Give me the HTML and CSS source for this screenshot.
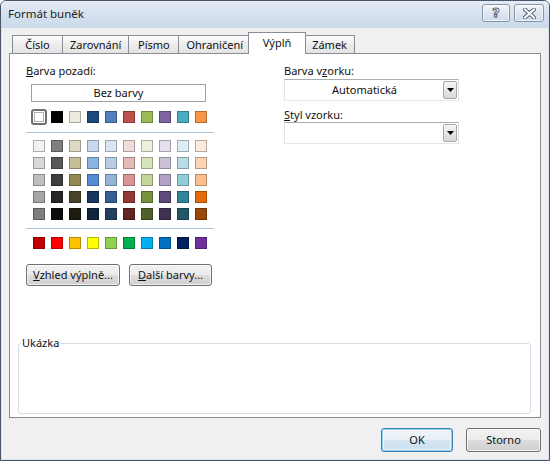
FILE: index.html
```html
<!DOCTYPE html>
<html lang="cs">
<head>
<meta charset="utf-8">
<title>Formát buněk</title>
<link rel="stylesheet" href="styles.css">
</head>
<body>
<div class="window">
  <div class="titlebar">
    <span class="title">Formát buněk</span>
    <div class="caption-buttons">
      <div class="cap help">?</div>
      <div class="cap close">
        <svg width="13" height="11" viewBox="0 0 13 11"><path d="M2 1.5 L11 9.5 M11 1.5 L2 9.5" stroke="#56647a" stroke-width="4" stroke-linecap="square"/><path d="M2 1.5 L11 9.5 M11 1.5 L2 9.5" stroke="#fff" stroke-width="2" stroke-linecap="square"/></svg>
      </div>
    </div>
  </div>
  <div class="client">
    <div class="tabs">
      <div class="tab">Číslo</div>
      <div class="tab">Zarovnání</div>
      <div class="tab">Písmo</div>
      <div class="tab">Ohraničení</div>
      <div class="tab active">Výplň</div>
      <div class="tab">Zámek</div>
    </div>
    <div class="panel">
      <div class="columns">
        <div class="left">
          <div class="label"><u>B</u>arva pozadí:</div>
          <div class="nocolor">Bez barvy</div>
          <div class="swatches toprow">
            <div class="cell selected"><span class="sw" style="background:#ffffff"></span></div>
            <div class="cell"><span class="sw" style="background:#000000"></span></div>
            <div class="cell"><span class="sw" style="background:#eeece1"></span></div>
            <div class="cell"><span class="sw" style="background:#1f497d"></span></div>
            <div class="cell"><span class="sw" style="background:#4f81bd"></span></div>
            <div class="cell"><span class="sw" style="background:#c0504d"></span></div>
            <div class="cell"><span class="sw" style="background:#9bbb59"></span></div>
            <div class="cell"><span class="sw" style="background:#8064a2"></span></div>
            <div class="cell"><span class="sw" style="background:#4bacc6"></span></div>
            <div class="cell"><span class="sw" style="background:#f79646"></span></div>
          </div>
          <div class="sep sep1"></div>
          <div class="swatches grid">
            <span class="sw" style="background:#f2f2f2"></span>
            <span class="sw" style="background:#7f7f7f"></span>
            <span class="sw" style="background:#ddd9c3"></span>
            <span class="sw" style="background:#c6d9f0"></span>
            <span class="sw" style="background:#dbe5f1"></span>
            <span class="sw" style="background:#f2dcdb"></span>
            <span class="sw" style="background:#ebf1dd"></span>
            <span class="sw" style="background:#e5e0ec"></span>
            <span class="sw" style="background:#dbeef3"></span>
            <span class="sw" style="background:#fdeada"></span>

            <span class="sw" style="background:#d8d8d8"></span>
            <span class="sw" style="background:#595959"></span>
            <span class="sw" style="background:#c4bd97"></span>
            <span class="sw" style="background:#8db3e2"></span>
            <span class="sw" style="background:#b8cce4"></span>
            <span class="sw" style="background:#e5b9b7"></span>
            <span class="sw" style="background:#d7e3bc"></span>
            <span class="sw" style="background:#ccc1d9"></span>
            <span class="sw" style="background:#b7dde8"></span>
            <span class="sw" style="background:#fbd5b5"></span>

            <span class="sw" style="background:#bfbfbf"></span>
            <span class="sw" style="background:#3f3f3f"></span>
            <span class="sw" style="background:#938953"></span>
            <span class="sw" style="background:#548dd4"></span>
            <span class="sw" style="background:#95b3d7"></span>
            <span class="sw" style="background:#d99694"></span>
            <span class="sw" style="background:#c3d69b"></span>
            <span class="sw" style="background:#b2a2c7"></span>
            <span class="sw" style="background:#92cddc"></span>
            <span class="sw" style="background:#fac08f"></span>

            <span class="sw" style="background:#a5a5a5"></span>
            <span class="sw" style="background:#262626"></span>
            <span class="sw" style="background:#494429"></span>
            <span class="sw" style="background:#17365d"></span>
            <span class="sw" style="background:#366092"></span>
            <span class="sw" style="background:#953734"></span>
            <span class="sw" style="background:#76923c"></span>
            <span class="sw" style="background:#5f497a"></span>
            <span class="sw" style="background:#31859b"></span>
            <span class="sw" style="background:#e36c09"></span>

            <span class="sw" style="background:#7f7f7f"></span>
            <span class="sw" style="background:#0c0c0c"></span>
            <span class="sw" style="background:#1d1b10"></span>
            <span class="sw" style="background:#0f243e"></span>
            <span class="sw" style="background:#244061"></span>
            <span class="sw" style="background:#632423"></span>
            <span class="sw" style="background:#4f6128"></span>
            <span class="sw" style="background:#3f3151"></span>
            <span class="sw" style="background:#205867"></span>
            <span class="sw" style="background:#974806"></span>
          </div>
          <div class="sep sep2"></div>
          <div class="swatches grid standard">
            <span class="sw" style="background:#c00000"></span>
            <span class="sw" style="background:#ff0000"></span>
            <span class="sw" style="background:#ffc000"></span>
            <span class="sw" style="background:#ffff00"></span>
            <span class="sw" style="background:#92d050"></span>
            <span class="sw" style="background:#00b050"></span>
            <span class="sw" style="background:#00b0f0"></span>
            <span class="sw" style="background:#0070c0"></span>
            <span class="sw" style="background:#002060"></span>
            <span class="sw" style="background:#7030a0"></span>
          </div>
          <div class="btnrow">
            <div class="btn fill"><u>V</u>zhled výplně...</div>
            <div class="btn more"><u>D</u>alší barvy...</div>
          </div>
        </div>
        <div class="right">
          <div class="label">Barva v<u>z</u>orku:</div>
          <div class="combo first">
            <span class="combo-text">Automatická</span>
            <span class="combo-arrow"><svg width="7" height="4" viewBox="0 0 7 4"><path d="M0 0 H7 L3.5 4 Z" fill="#000"/></svg></span>
          </div>
          <div class="label second"><u>S</u>tyl vzorku:</div>
          <div class="combo">
            <span class="combo-text"></span>
            <span class="combo-arrow"><svg width="7" height="4" viewBox="0 0 7 4"><path d="M0 0 H7 L3.5 4 Z" fill="#000"/></svg></span>
          </div>
        </div>
      </div>
      <fieldset class="sample">
        <legend>Ukázka</legend>
      </fieldset>
    </div>
    <div class="footer">
      <div class="btn dlg default">OK</div>
      <div class="btn dlg">Storno</div>
    </div>
  </div>
</div>
</body>
</html>
```
FILE: styles.css
```css
html, body {
  margin: 0;
  padding: 0;
}
body {
  width: 550px;
  height: 461px;
  overflow: hidden;
  font-family: "Noto Sans", "DejaVu Sans", sans-serif;
  font-size: 11px;
  color: #111;
  background: #ffffff;
}
u {
  text-decoration: underline;
  text-underline-offset: 1px;
}

.window {
  box-sizing: border-box;
  width: 550px;
  height: 461px;
  border: 1px solid #485566;
  border-radius: 6px 6px 0 0;
  background: #d6e2f0;
  display: flex;
  flex-direction: column;
  overflow: hidden;
}

.titlebar {
  height: 27px;
  flex: none;
  display: flex;
  align-items: flex-start;
  background: linear-gradient(#e4ecf6, #d3dfee 60%, #ccdaeb);
}
.title {
  margin: 5px 0 0 7px;
  font-size: 11.5px;
  color: #1e1e1e;
  line-height: 16px;
}
.caption-buttons {
  margin: 3px 5px 0 auto;
  display: flex;
  gap: 4px;
}
.cap {
  box-sizing: border-box;
  width: 28px;
  height: 18px;
  border: 1px solid #8794a8;
  border-radius: 3px;
  background: linear-gradient(#f3f6fa, #dde5ef 50%, #d2dcea);
  box-shadow: inset 0 0 0 1px rgba(255,255,255,0.6);
  display: flex;
  align-items: center;
  justify-content: center;
}
.cap.help {
  font-family: "DejaVu Sans", sans-serif;
  font-size: 13px;
  font-weight: bold;
  line-height: 16px;
  color: #ffffff;
  -webkit-text-stroke: 1px #56647a;
}
.cap.close {
  width: 30px;
}

.client {
  flex: 1;
  margin: 0 1px 1px 1px;
  background: #f0f0f0;
  padding: 4px 7px 0 7px;
  display: flex;
  flex-direction: column;
}

.tabs {
  height: 21px;
  display: flex;
  align-items: flex-end;
  padding-left: 3px;
}
.tab {
  box-sizing: border-box;
  height: 18px;
  min-width: 51px;
  padding: 0 7px;
  border: 1px solid #898c95;
  border-bottom: 0;
  margin-right: -1px;
  background: linear-gradient(#fdfdfd, #ececec 50%, #e3e3e3);
  text-align: center;
  line-height: 17px;
  white-space: nowrap;
}
.tab.active {
  height: 22px;
  min-width: 58px;
  margin: 0 -2px -1px -2px;
  padding: 0 9px;
  background: #ffffff;
  position: relative;
  z-index: 2;
  line-height: 19px;
}

.panel {
  box-sizing: border-box;
  height: 365px;
  flex: none;
  border: 1px solid #898c95;
  background: #ffffff;
  padding: 10px 9px 3px 8px;
  display: flex;
  flex-direction: column;
}

.columns {
  display: flex;
  padding-left: 8px;
}
.left {
  width: 188px;
  display: flex;
  flex-direction: column;
}
.right {
  margin-left: 70px;
  width: 175px;
  display: flex;
  flex-direction: column;
}
.label {
  height: 14px;
  line-height: 14px;
  white-space: nowrap;
}
.label.second {
  margin-top: 7px;
}

.nocolor {
  box-sizing: border-box;
  margin: 6px 0 0 5px;
  width: 175px;
  height: 18px;
  border: 1px solid #a0a0a0;
  text-align: center;
  line-height: 16px;
}

.swatches {
  margin-left: 4px;
  display: grid;
  grid-template-columns: repeat(10, 18px);
}
.toprow {
  margin-top: 7px;
  height: 16px;
}
.cell {
  height: 16px;
  display: flex;
  align-items: center;
  justify-content: center;
}
.sw {
  display: block;
  box-sizing: border-box;
  width: 12px;
  height: 12px;
  box-shadow: inset 0 0 0 1px rgba(0, 0, 0, 0.28);
}
.grid {
  row-gap: 5px;
  justify-items: center;
}
.cell.selected {
  box-sizing: border-box;
  width: 16px;
  margin-left: 1px;
  border: 2px solid #707070;
  border-radius: 3px;
  background: #ffffff;
}
.cell.selected .sw {
  width: 10px;
  height: 10px;
  box-shadow: inset 0 0 0 1px #b0b0b0;
}

.sep {
  height: 1px;
  background: #adc3da;
}
.sep1 {
  margin-top: 7px;
}
.sep1 + .grid {
  margin-top: 7px;
}
.sep2 {
  margin-top: 8px;
}
.sep2 + .grid {
  margin-top: 8px;
}

.btn {
  box-sizing: border-box;
  height: 22px;
  border: 1px solid #707070;
  border-radius: 3px;
  background: linear-gradient(#f2f2f2, #ebebeb 50%, #dddddd 51%, #cfcfcf);
  box-shadow: inset 0 0 0 1px rgba(255,255,255,0.7);
  text-align: center;
  line-height: 20px;
  white-space: nowrap;
}
.btnrow {
  margin-top: 15px;
  display: flex;
  gap: 9px;
}
.btn.fill {
  width: 94px;
}
.btn.more {
  width: 83px;
}

.combo {
  box-sizing: border-box;
  height: 22px;
  border: 1px solid #abadb3;
  border-left-color: #e2e3ea;
  border-right-color: #dbdfe6;
  border-bottom-color: #e3e9ef;
  display: flex;
  align-items: stretch;
  padding: 1px;
}
.combo.first {
  margin-top: 1px;
}
.combo-text {
  flex: 1;
  text-align: center;
  line-height: 18px;
}
.combo-arrow {
  box-sizing: border-box;
  width: 14px;
  border: 1px solid #a7a7a7;
  border-radius: 2px;
  background: linear-gradient(#f6f6f6, #e6e6e6 50%, #d8d8d8);
  display: flex;
  align-items: center;
  justify-content: center;
}

.sample {
  margin: auto 0 0 0;
  padding: 0;
  height: 78px;
  box-sizing: border-box;
  border: 1px solid #d5dfe5;
  border-radius: 3px;
}
.sample legend {
  padding: 0 1px;
  margin-left: 2px;
  line-height: 14px;
}

.footer {
  margin-top: 10px;
  display: flex;
  justify-content: flex-end;
  gap: 13px;
}
.btn.dlg {
  width: 75px;
  height: 24px;
  line-height: 22px;
}
.btn.default {
  width: 72px;
  border-color: #3c7fb1;
  box-shadow: inset 0 0 0 1px #8cd0f0, inset 0 0 0 2px rgba(255,255,255,0.6);
  background: linear-gradient(#f0f6fa, #e5eff6 50%, #d6e6f1 51%, #c9def0);
}
```
